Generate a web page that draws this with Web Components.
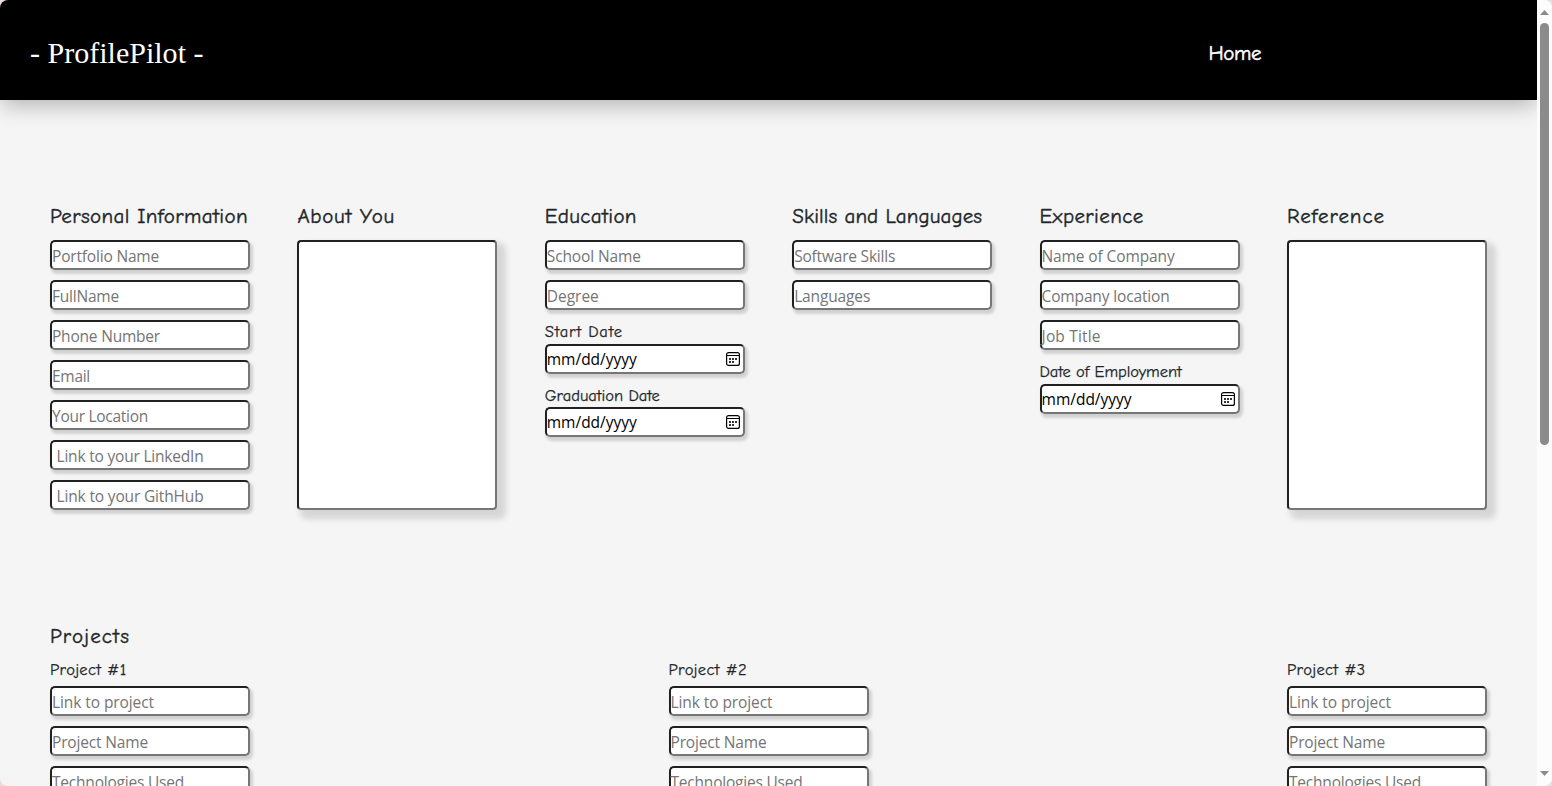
<!DOCTYPE html>
<html lang="en">
<head>
<meta charset="utf-8">
<title>ProfilePilot</title>
<style>
html,body{margin:0;height:100%;overflow:hidden;background:#eddcda}
body{font-family:"Open Sans","Noto Sans",sans-serif;font-size:16px;color:#212529}
</style>
</head>
<body>
<profile-app></profile-app>
<script>
const define=(name,html,setup)=>customElements.define(name,class extends HTMLElement{
  connectedCallback(){
    if(!this.shadowRoot){
      this.attachShadow({mode:'open'}).innerHTML=html;
    }
    if(setup)setup(this,this.shadowRoot);
  }
});

/* A single line whose tracking is adjusted to an exact width (attribute w). */
define('fit-text',`<style>:host{display:inline-block;white-space:pre}span{display:inline-block;white-space:pre}</style><span></span>`,(el,root)=>{
  const s=root.querySelector('span');
  s.textContent=el.getAttribute('text');
  const w=+el.getAttribute('w');
  if(w){
    const natural=s.getBoundingClientRect().width;
    s.style.letterSpacing=((w-natural)/s.textContent.length)+'px';
  }
});

define('site-header',`<style>
:host{display:flex;align-items:center;justify-content:space-between;box-sizing:border-box;height:100px;flex:none;background:#000;color:#fff;padding:6px 276px 0 30px;box-shadow:0 8px 20px -2px rgba(0,0,0,.26);z-index:1}
.logo{font:30px/40px "Liberation Serif","Times New Roman",serif}
.home{font:500 21px/28px "Comic Sans MS","Comic Neue",Lato,sans-serif;-webkit-text-stroke:.5px #fff}
</style><fit-text class="logo" text="- ProfilePilot -" w="173.500"></fit-text><fit-text class="home" text="Home" w="52.500"></fit-text>`);

define('field-box',`<style>
:host{display:flex;align-items:center;justify-content:space-between;box-sizing:border-box;width:200px;height:30px;margin-bottom:10px;flex:none;background:#fff;border:2px solid;border-color:#212121 #767676 #767676 #212121;border-radius:5px;color:#757575;box-shadow:2px 3px 3px 1px rgba(0,0,0,.15);font:15.5px/24px "Open Sans","Noto Sans",sans-serif;white-space:pre}
:host([area]){height:270px;box-shadow:6px 6px 6px 3px rgba(0,0,0,.13);border-radius:4px}
:host([date]){color:#000}
fit-text{padding-top:2px}
:host([indent]) fit-text{padding-left:4.5px}
:host([date]) fit-text{padding-top:0}
svg{display:none;margin-right:3px;margin-top:-1px}
:host([date]) svg{display:block}
</style><svg width="14" height="14" viewBox="0 0 14 14"><rect x=".6" y=".6" width="12.8" height="12.8" rx="2" fill="none" stroke="#000" stroke-width="1.2"/><path d="M1 3.5h12" stroke="#000"/><path d="M3 6h2v2H3zM6 6h2v2H6zM9 6h2v2H9zM3 9h2v2H3zM6 9h2v2H6z" fill="#333"/></svg>`,(el,root)=>{
  if(!el.hasAttribute('text')||root.querySelector('fit-text'))return;
  const t=document.createElement('fit-text');
  t.setAttribute('text',el.getAttribute('text'));
  t.setAttribute('w',el.getAttribute('w'));
  root.insertBefore(t,root.querySelector('svg'));
});

define('field-label',`<style>:host{display:block;height:24px;white-space:nowrap;font:16.5px/24px "Comic Sans MS","Comic Neue",Lato,sans-serif;color:#212529;-webkit-text-stroke:.25px #212529}</style><slot></slot>`);

define('form-column',`<style>
:host{display:flex;flex-direction:column;align-items:flex-start;width:200px}
h2{margin:0;height:39px;font:500 21px/30px "Comic Sans MS","Comic Neue",Lato,sans-serif;color:#212529;white-space:nowrap;-webkit-text-stroke:.4px #212529}
</style><h2><slot name="title"></slot></h2><slot></slot>`);

const dateField='<field-box date text="mm/dd/yyyy" w="90"></field-box>';
const project=(n,w)=>`<div class="project"><field-label><fit-text text="Project #${n}" w="${w}"></fit-text></field-label>
<field-box text="Link to project" w="102"></field-box><field-box text="Project Name" w="96"></field-box><field-box text="Technologies Used" w="132"></field-box></div>`;
const title=(t,w)=>`<fit-text slot="title" text="${t}" w="${w}"></fit-text>`;

define('profile-form',`<style>
:host{display:block;padding:101px 50px 0}
.columns,.projects{display:flex;justify-content:space-between}
.columns{height:419px}
h2{margin:0;height:38px;font:500 21px/32px "Comic Sans MS","Comic Neue",Lato,sans-serif;-webkit-text-stroke:.4px #212529}
.project{width:200px}
.project field-label{height:28px}
.tight{margin-top:-1px}
.tight fit-text{padding-top:1px}
</style>
<div class="columns">
<form-column>${title('Personal Information',198)}
<field-box text="Portfolio Name" w="107"></field-box><field-box text="FullName" w="67"></field-box><field-box text="Phone Number" w="108"></field-box><field-box text="Email" w="38"></field-box><field-box text="Your Location" w="96"></field-box><field-box indent text="Link to your LinkedIn" w="147"></field-box><field-box indent text="Link to your GithHub" w="147"></field-box></form-column>
<form-column>${title('About You',97.5)}<field-box area></field-box></form-column>
<form-column>${title('Education',92)}<field-box text="School Name" w="94"></field-box><field-box text="Degree" w="52"></field-box>
<field-label><fit-text text="Start Date" w="78"></fit-text></field-label>${dateField}
<field-label class="tight"><fit-text text="Graduation Date" w="115"></fit-text></field-label>${dateField}</form-column>
<form-column>${title('Skills and Languages',190)}<field-box text="Software Skills" w="101"></field-box><field-box text="Languages" w="76"></field-box></form-column>
<form-column>${title('Experience',104)}<field-box text="Name of Company" w="133"></field-box><field-box text="Company location" w="128"></field-box><field-box text="Job Title" w="59"></field-box>
<field-label><fit-text text="Date of Employment" w="142"></fit-text></field-label>${dateField}</form-column>
<form-column>${title('Reference',98)}<field-box area></field-box></form-column>
</div>
<h2><fit-text text="Projects" w="80"></fit-text></h2>
<div class="projects">${project(1,76.5)}${project(2,78.5)}${project(3,78.5)}</div>`);

define('scroll-rail',`<style>
:host{display:flex;flex-direction:column;align-items:center;box-sizing:border-box;width:15px;height:100%;background:#fcfcfc;padding:10px 0 10px;position:relative;z-index:2}
i{display:block;width:9px;height:422px;margin:8px 0 auto;background:#8b8b8b;border-radius:5px}
svg{display:block;flex:none}
</style><svg width="9" height="5"><path d="M0 5 4.5 0 9 5z" fill="#8b8b8b"/></svg><i></i><svg width="9" height="5"><path d="M0 0h9L4.5 5z" fill="#8b8b8b"/></svg>`);

define('profile-app',`<style>
:host{display:flex;width:1552px;height:786px;overflow:hidden;border-radius:8px;background:#f5f5f5}
main{display:flex;flex-direction:column;width:1537px;height:786px;overflow:hidden}
site-header{position:relative}
</style><main><site-header></site-header><profile-form></profile-form></main><scroll-rail></scroll-rail>`);
</script>
</body>
</html>
